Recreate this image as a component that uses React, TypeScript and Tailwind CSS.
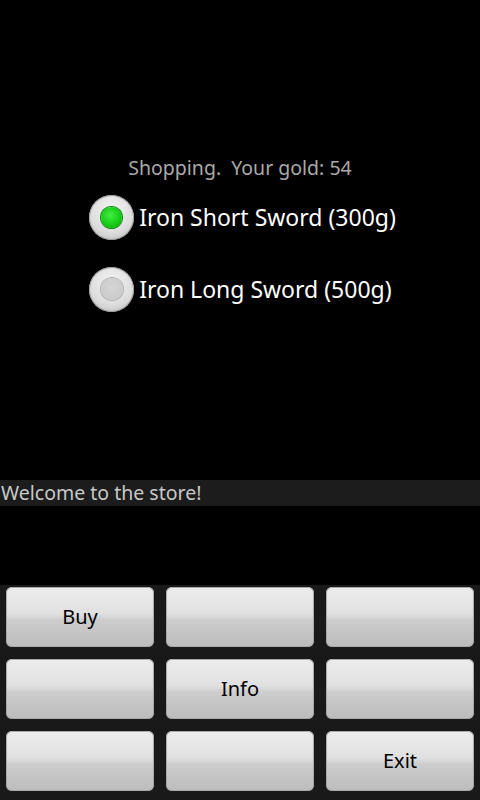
const items = [
  { label: 'Iron Short Sword (300g)', checked: true },
  { label: 'Iron Long Sword (500g)', checked: false },
];

const buttons = ['Buy', '', '', '', 'Info', '', '', '', 'Exit'];

const Radio = ({ checked }: { checked: boolean }) => (
  <div className="w-[45px] h-[45px] rounded-full flex items-center justify-center bg-[radial-gradient(circle_at_50%_35%,#f4f4f4,#dcdcdc_60%,#b4b4b4)] shadow-[inset_0_0_0_1px_#9c9c9c]">
    {checked ? (
      <div className="w-[21px] h-[21px] rounded-full bg-[radial-gradient(circle_at_45%_40%,#44ee44,#12c912_60%,#0a9a0a)] shadow-[0_0_0_1px_#0b8a0b]" />
    ) : (
      <div className="w-[22px] h-[22px] rounded-full bg-[radial-gradient(circle_at_50%_45%,#d6d6d6,#c6c6c6)] shadow-[0_0_0_1px_#b0b0b0]" />
    )}
  </div>
);

export default function App() {
  return (
    <div className="w-[480px] h-[800px] bg-black flex flex-col font-['Noto_Sans','Open_Sans',sans-serif]">
      <div className="h-[480px] flex flex-col items-center pt-[155px]">
        <div className="text-[19.5px] leading-[26px] text-[#a9a9a9] whitespace-pre">Shopping.  Your gold: 54</div>
        <div className="flex flex-col w-fit ml-[5px]">
          {items.map((item) => (
            <div key={item.label} className="h-[72px] flex items-center gap-[5px]">
              <Radio checked={item.checked} />
              <span className="text-[23px] text-white">{item.label}</span>
            </div>
          ))}
        </div>
      </div>
      <div className="h-[26px] bg-[#1c1c1c] text-[19.5px] leading-[26px] text-[#c8c8c8] pl-[1px]">
        Welcome to the store!
      </div>
      <div className="h-[79px] bg-black" />
      <div className="h-[215px] bg-[#191919] grid grid-cols-3 content-start gap-[12px] px-[6px] pt-[2px]">
        {buttons.map((b, i) => (
          <div
            key={i}
            className="h-[60px] rounded-[6px] flex items-center justify-center text-[20px] text-black bg-[linear-gradient(to_bottom,#ededed,#e0e0e0_45%,#cdcdcd_55%,#bcbcbc)] shadow-[inset_0_0_0_1px_#a8a8a8]"
          >
            {b}
          </div>
        ))}
      </div>
    </div>
  );
}
